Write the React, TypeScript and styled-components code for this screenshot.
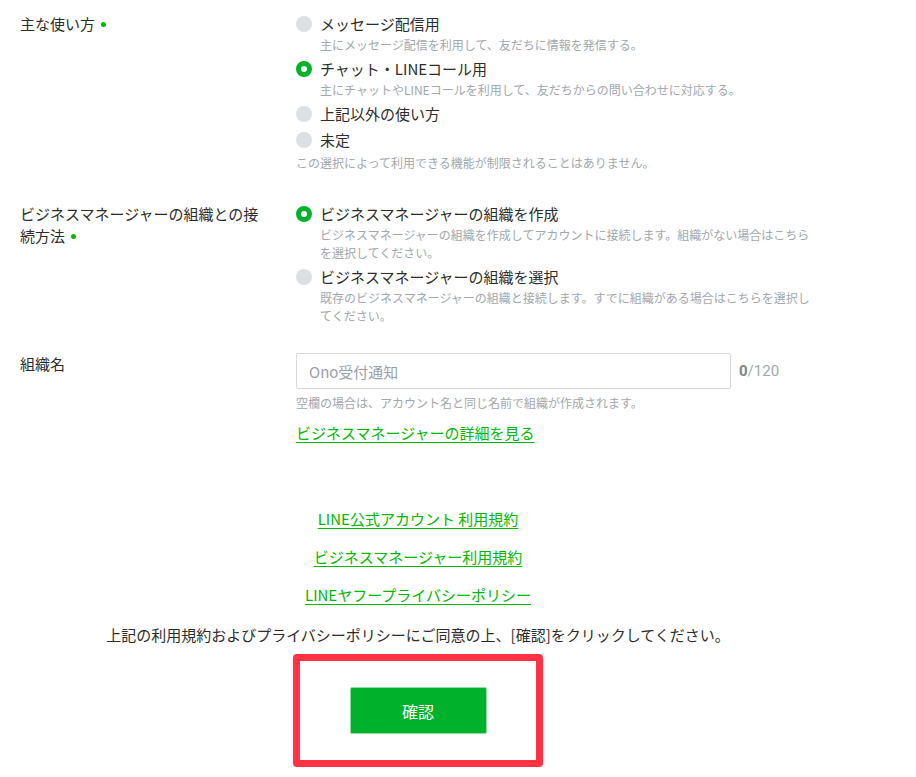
import React from 'react';
import styled, { createGlobalStyle } from 'styled-components';

const GREEN = '#00b22b';
const LINK = '#00b900';

const GlobalStyle = createGlobalStyle`
  html, body {
    margin: 0;
    padding: 0;
    background: #fff;
  }
  body {
    font-family: "Noto Sans CJK JP", "Noto Sans", sans-serif;
    color: #2d2d2d;
  }
`;

const Page = styled.div`
  width: 836px;
  padding-top: 13px;
`;

const FormRow = styled.div<{ $mb: number }>`
  display: grid;
  grid-template-columns: 250px 520px;
  column-gap: 26px;
  padding-left: 20px;
  margin-bottom: ${(p) => p.$mb}px;
`;

const Label = styled.div`
  font-size: 15px;
  line-height: 22px;
  color: #2d2d2d;
`;

const RequiredDot = styled.span`
  display: inline-block;
  width: 5px;
  height: 5px;
  border-radius: 50%;
  background: ${LINK};
  margin-left: 6px;
  vertical-align: 3px;
`;

const Options = styled.div`
  display: flex;
  flex-direction: column;
  gap: 4px;
`;

const Option = styled.label`
  display: block;
  cursor: pointer;
`;

const OptionHead = styled.div`
  display: flex;
  align-items: center;
  gap: 8px;
  font-size: 15px;
  line-height: 22px;
  color: #2d2d2d;
`;

const Radio = styled.span<{ $checked?: boolean }>`
  flex: none;
  width: 16px;
  height: 16px;
  border-radius: 50%;
  box-sizing: border-box;
  background: ${(p) => (p.$checked ? '#fff' : '#dcdfe3')};
  border: ${(p) => (p.$checked ? `5px solid ${GREEN}` : 'none')};
`;

const Desc = styled.div<{ $indent?: boolean; $mt?: number }>`
  font-size: 12px;
  line-height: 18px;
  color: #a2a8ae;
  padding-left: ${(p) => (p.$indent ? 24 : 0)}px;
  margin-top: ${(p) => p.$mt ?? 0}px;
`;

const InputLine = styled.div`
  display: flex;
  align-items: center;
  gap: 8px;
`;

const TextInput = styled.input`
  width: 435px;
  height: 36px;
  box-sizing: border-box;
  border: 1px solid #d6dadf;
  border-radius: 2px;
  padding: 0 12px;
  font-family: inherit;
  font-size: 15px;
  color: #2d2d2d;
  outline: none;
  &::placeholder {
    color: #9ba1a8;
  }
`;

const Counter = styled.span`
  font-family: Roboto, "Noto Sans", sans-serif;
  font-size: 15px;
  color: #a2a8ae;
  b {
    color: #7d848b;
  }
`;

const GreenLink = styled.a`
  color: ${LINK};
  text-decoration: underline;
  text-underline-offset: 3px;
  font-size: 15px;
  line-height: 22px;
`;

const DetailLink = styled(GreenLink)`
  display: inline-block;
  margin-top: 10px;
`;

const Terms = styled.div`
  display: flex;
  flex-direction: column;
  align-items: center;
  margin-top: 64px;
`;

const TermLinks = styled.div`
  display: flex;
  flex-direction: column;
  align-items: center;
  gap: 16px;
`;

const Agreement = styled.p`
  margin: 18px 0 0;
  text-align: center;
  font-size: 15px;
  line-height: 22px;
  color: #2d2d2d;
`;

const Highlight = styled.div`
  margin-top: 8px;
  width: 250px;
  height: 113px;
  box-sizing: border-box;
  border: 7px solid #ff3343;
  border-radius: 4px;
  box-shadow: 0 2px 4px rgba(0, 0, 0, 0.12);
  display: flex;
  align-items: center;
  justify-content: center;
`;

const ConfirmButton = styled.button`
  width: 137px;
  height: 47px;
  background: ${GREEN};
  border: 1px solid #8fdca3;
  border-radius: 2px;
  color: #fff;
  font-family: inherit;
  font-size: 16px;
  font-weight: 400;
  cursor: pointer;
`;

type Opt = { label: string; desc?: string; checked?: boolean };

const usage: Opt[] = [
  { label: 'メッセージ配信用', desc: '主にメッセージ配信を利用して、友だちに情報を発信する。' },
  {
    label: 'チャット・LINEコール用',
    desc: '主にチャットやLINEコールを利用して、友だちからの問い合わせに対応する。',
    checked: true,
  },
  { label: '上記以外の使い方' },
  { label: '未定' },
];

const connect: Opt[] = [
  {
    label: 'ビジネスマネージャーの組織を作成',
    desc: 'ビジネスマネージャーの組織を作成してアカウントに接続します。組織がない場合はこちらを選択してください。',
    checked: true,
  },
  {
    label: 'ビジネスマネージャーの組織を選択',
    desc: '既存のビジネスマネージャーの組織と接続します。すでに組織がある場合はこちらを選択してください。',
  },
];

const RadioGroup: React.FC<{ items: Opt[] }> = ({ items }) => (
  <Options>
    {items.map((o) => (
      <Option key={o.label}>
        <OptionHead>
          <Radio $checked={o.checked} />
          {o.label}
        </OptionHead>
        {o.desc && (
          <Desc $indent $mt={1}>
            {o.desc}
          </Desc>
        )}
      </Option>
    ))}
  </Options>
);

const App: React.FC = () => (
  <Page>
    <GlobalStyle />
    <FormRow $mb={31}>
      <Label>
        主な使い方<RequiredDot />
      </Label>
      <div>
        <RadioGroup items={usage} />
        <Desc $mt={3}>この選択によって利用できる機能が制限されることはありません。</Desc>
      </div>
    </FormRow>

    <FormRow $mb={28}>
      <Label>
        ビジネスマネージャーの組織との接続方法<RequiredDot />
      </Label>
      <RadioGroup items={connect} />
    </FormRow>

    <FormRow $mb={0}>
      <Label>組織名</Label>
      <div>
        <InputLine>
          <TextInput placeholder="Ono受付通知" />
          <Counter>
            <b>0</b>/120
          </Counter>
        </InputLine>
        <Desc $mt={5}>空欄の場合は、アカウント名と同じ名前で組織が作成されます。</Desc>
        <DetailLink href="#">ビジネスマネージャーの詳細を見る</DetailLink>
      </div>
    </FormRow>

    <Terms>
      <TermLinks>
        <GreenLink href="#">LINE公式アカウント 利用規約</GreenLink>
        <GreenLink href="#">ビジネスマネージャー利用規約</GreenLink>
        <GreenLink href="#">LINEヤフープライバシーポリシー</GreenLink>
      </TermLinks>
      <Agreement>上記の利用規約およびプライバシーポリシーにご同意の上、[確認]をクリックしてください。</Agreement>
      <Highlight>
        <ConfirmButton>確認</ConfirmButton>
      </Highlight>
    </Terms>
  </Page>
);

export default App;
